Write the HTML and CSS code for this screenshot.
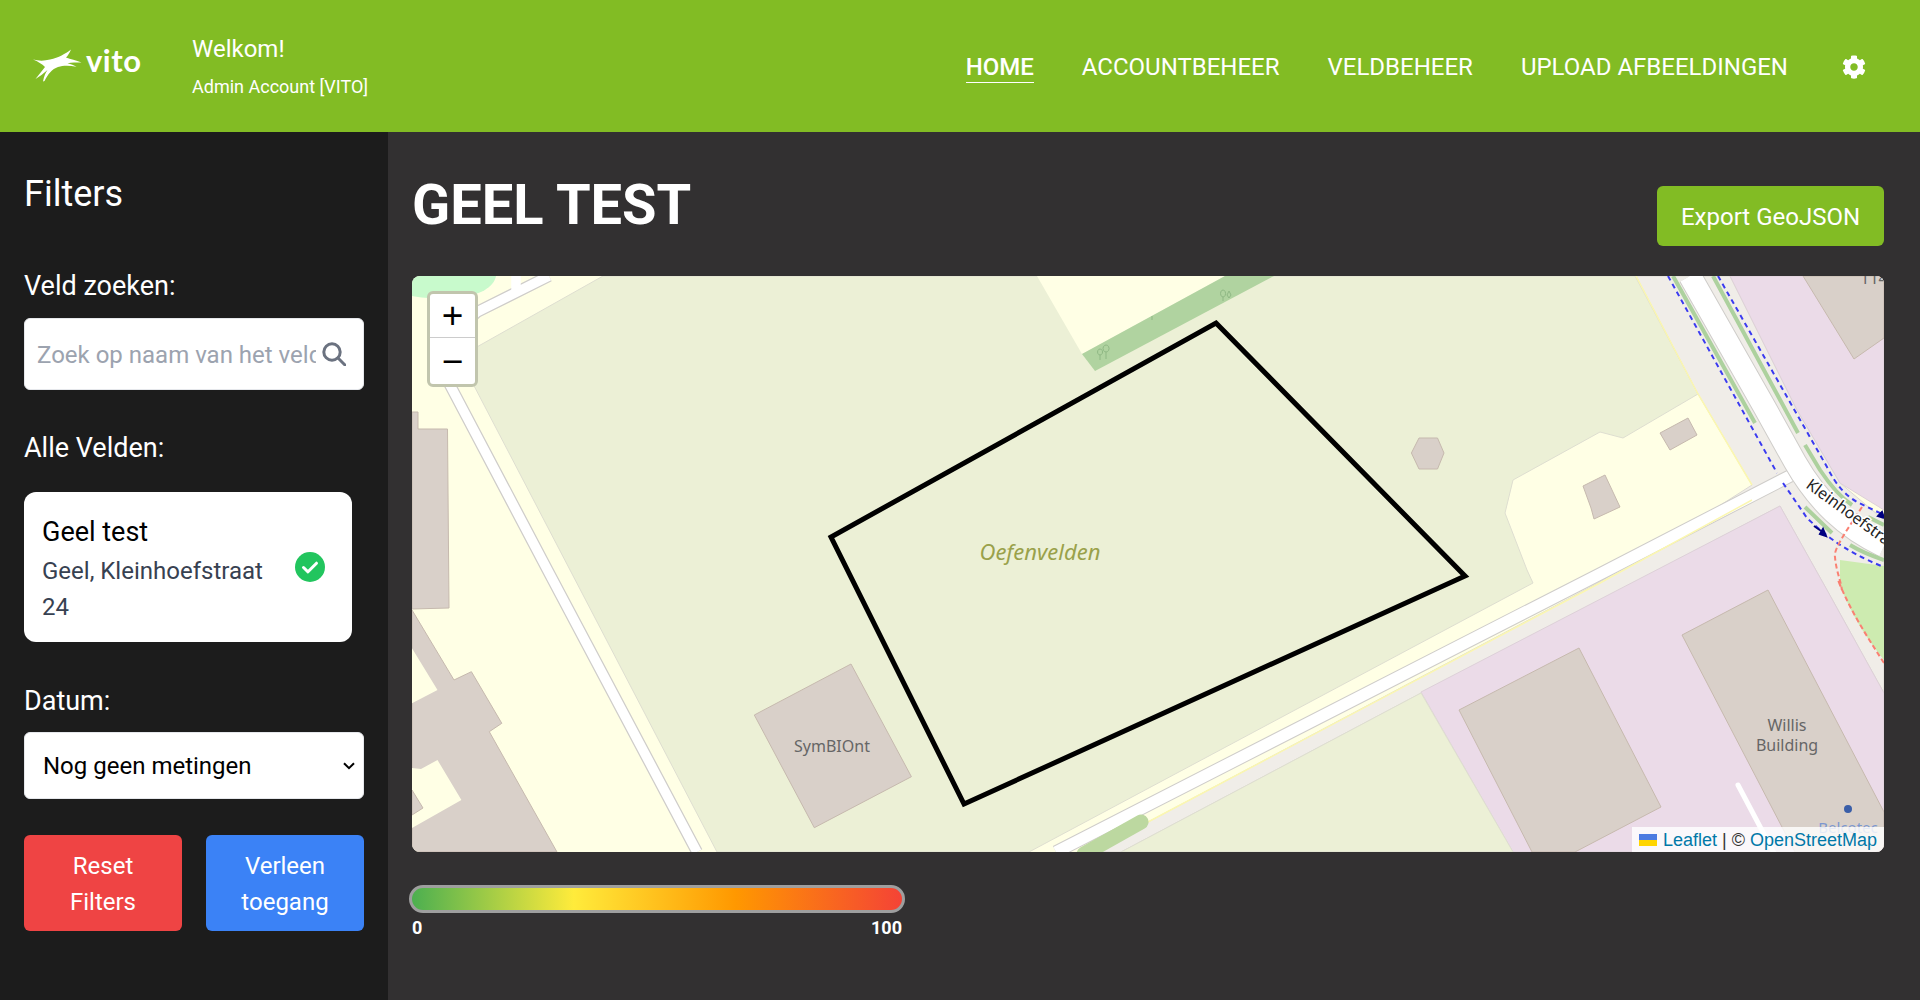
FILE: index.html
```html
<!DOCTYPE html>
<html lang="nl">
<head>
<meta charset="utf-8">
<title>Geel test</title>
<link rel="stylesheet" href="styles.css">
</head>
<body>
<header class="topbar">
  <div class="brand">
    <svg class="bird" viewBox="0 0 50 34" aria-hidden="true"><path d="M0 10.500 C6 12 11 12 17 10.500 C26 8.500 32 5 38 0.500 C36.500 4 35 6.500 33 8.500 C37.500 10 43 11.500 48.500 13.500 C43 13.500 39 13.500 34.500 14.300 C38 15.300 41 16.300 43.500 17.700 C36 16.500 30 16.500 25 18 C19 20 15 25 11.500 32 L10 32.500 C11 27 12.500 24 14.500 21 C10.500 24.500 6.500 27.500 2.500 30 C5.500 26 9 22 12 18 C9 15 5 12.500 0 10.500 Z"/></svg>
    <span class="wordmark">vito</span>
  </div>
  <div class="welcome">
    <div class="welcome-title">Welkom!</div>
    <div class="welcome-user">Admin Account [VITO]</div>
  </div>
  <nav class="nav">
    <a class="nav-link active">HOME</a>
    <a class="nav-link">ACCOUNTBEHEER</a>
    <a class="nav-link">VELDBEHEER</a>
    <a class="nav-link">UPLOAD AFBEELDINGEN</a>
    <svg class="gear" viewBox="0 0 512 512" aria-hidden="true"><path d="M487.400 315.700l-42.600-24.600c4.300-23.200 4.300-47 0-70.200l42.600-24.600c4.900-2.800 7.100-8.600 5.500-14-11.100-35.600-30-67.800-54.700-94.600-3.800-4.100-10-5.100-14.800-2.300L380.800 110c-17.900-15.400-38.500-27.300-60.800-35.100V25.800c0-5.600-3.900-10.500-9.400-11.700-36.700-8.200-74.300-7.800-109.200 0-5.500 1.200-9.400 6.100-9.400 11.700V75c-22.200 7.900-42.800 19.800-60.800 35.100L88.700 85.500c-4.900-2.800-11-1.900-14.800 2.300-24.700 26.700-43.600 58.900-54.700 94.600-1.700 5.400.6 11.200 5.500 14L67.300 221c-4.300 23.200-4.300 47 0 70.200l-42.600 24.600c-4.900 2.800-7.100 8.600-5.500 14 11.100 35.600 30 67.800 54.700 94.600 3.800 4.100 10 5.100 14.800 2.300l42.600-24.600c17.900 15.400 38.500 27.300 60.800 35.100v49.200c0 5.600 3.900 10.500 9.400 11.700 36.700 8.200 74.300 7.800 109.200 0 5.500-1.200 9.400-6.100 9.400-11.700v-49.200c22.200-7.900 42.800-19.800 60.800-35.100l42.600 24.600c4.900 2.800 11 1.900 14.800-2.300 24.700-26.700 43.600-58.900 54.700-94.600 1.500-5.500-.7-11.300-5.600-14.100zM256 336c-44.100 0-80-35.900-80-80s35.900-80 80-80 80 35.900 80 80-35.900 80-80 80z"/></svg>
  </nav>
</header>
<div class="layout">
  <aside class="sidebar">
    <h2 class="filters-title">Filters</h2>
    <label class="field-label label-search">Veld zoeken:</label>
    <div class="search">
      <input class="search-input" type="text" placeholder="Zoek op naam van het veld">
      <svg class="search-icon" viewBox="0 0 24 24" aria-hidden="true"><circle cx="10" cy="10" r="8.200"/><line x1="16" y1="16" x2="23" y2="23"/></svg>
    </div>
    <label class="field-label label-fields">Alle Velden:</label>
    <div class="card">
      <div class="card-text">
        <div class="card-title">Geel test</div>
        <div class="card-address">Geel, Kleinhoefstraat 24</div>
      </div>
      <svg class="card-check" viewBox="0 0 30 30" aria-hidden="true"><circle cx="15" cy="15" r="15"/><path d="M8.500 15.500l4.500 4.300 8.500-8.600"/></svg>
    </div>
    <label class="field-label label-date">Datum:</label>
    <div class="select-wrap">
      <select class="date-select"><option>Nog geen metingen</option></select>
      <svg class="select-chevron" viewBox="0 0 12 8" aria-hidden="true"><path d="M1 1.200l5 5 5-5"/></svg>
    </div>
    <div class="actions">
      <button class="btn btn-red">Reset Filters</button>
      <button class="btn btn-blue">Verleen toegang</button>
    </div>
  </aside>
  <main class="main">
    <div class="title-row">
      <h1 class="page-title">GEEL TEST</h1>
      <button class="export">Export GeoJSON</button>
    </div>
    <div class="map">
      <svg class="map-svg" viewBox="412 276 1472 576" aria-label="Kaart">
        <rect class="m-yellow" x="412" y="276" width="1472" height="576"/>
        <path class="m-meadow" d="M412 276H496C494 287 480 296 455 298C438 299 422 298 412 296Z"/>
        <path class="m-farm" d="M603 276L459 357L717 852H1029L1533 583L1527 570L1505 513L1513 480L1600 432L1623 438L1698 394L1635 276Z"/>
        <path class="m-yellow-e" d="M1037 276L1082 354L1225 276Z"/>
        <path class="m-green-strip" d="M1082 354L1095 371L1274 276H1225Z"/>
        <path class="m-tree" d="M1100 349a2.500 3 0 1 0 .1 0M1100 355v5M1106 345a3 3.500 0 1 0 .1 0M1106 352v7M1223 290a2.500 3.500 0 1 0 .1 0M1223 297v4M1229 291l2 4-2 3-2-3zM1152 316v4"/>

        <path class="m-paved" d="M1092 852H1121L1421 693L1600 600L1620 590L1780 506L1827 590L1884 693V852H1884V520L1840 483L1797 410L1730 276H1636L1698 394L1752 485L1600 582L1148 822Z"/>
        <path class="m-pink" d="M1730 276H1884V510L1840 483L1797 410Z"/>
        <path class="m-pink" d="M1421 692L1780 506L1827 590L1884 693V852H1513Z"/>
        <path class="m-farm" d="M1121 852L1421 693L1513 852Z"/>
        <path class="m-light-green" d="M1840 560L1884 566V660C1866 638 1850 612 1840 585Z"/>

        <path class="m-road-casing thin" d="M549 276L477 312L440 345"/>
        <path class="m-road thin" d="M549 276L477 312L440 345"/>
        <path class="m-road thin" d="M516 276V290"/>
        <path class="m-road-casing thin" d="M435 357L450 385L547.500 570L697 852"/>
        <path class="m-road thin" d="M435 357L450 385L547.500 570L697 852"/>
        <path class="m-road-casing mid" d="M1056 852L1600 574L1790 476"/>
        <path class="m-road mid" d="M1056 852L1600 574L1790 476"/>
        <path class="m-yellow-line" d="M1148 822L1600 583L1752 500"/>
        <path class="m-road-casing wide" d="M1690 276L1765 408L1795 462C1818 502 1846 528 1884 546"/>
        <path class="m-road wide" d="M1690 276L1765 408L1795 462C1818 502 1846 528 1884 546"/>
        <path class="m-yellow-line" d="M1636 276L1698 394L1752 485"/>
        <path class="m-cycle cap" d="M1084 854L1141 822"/>
        <path class="m-cycle-thin" d="M1673 276L1755 423M1713 276L1798 433M1805 445L1820 470C1830 485 1840 497 1852 505M1868 517L1884 525M1805 507L1832 533M1850 545C1860 551 1872 556 1884 560"/>
        <path class="m-blue-dash" d="M1668 276L1777 473M1783 483L1807 518C1820 530 1840 550 1884 567M1718 276L1827 467C1836 485 1845 495 1857 502L1884 515"/>
        <path class="m-red-dash" d="M1862 507L1845 533C1838 545 1834 552 1835 557C1836 570 1840 578 1842 590L1838 580C1850 610 1866 635 1884 663"/>
        <path class="m-arrow" d="M1814 526L1824 533M1820 534L1826 536L1823 529ZM1882 512L1878 516L1884 518Z"/>
        <path class="m-service" d="M1738 785L1775 855"/>

        <path class="m-building" d="M412 412H418V429H447.500L449 608L412 609Z"/>
        <path class="m-building" d="M412 610L454 680L471.400 671.700L501.800 723.300L489.300 731.700L557 852H412Z"/>
        <path class="m-yellow-e" d="M412 648.300L437.500 690L412 703.300ZM412 768L421 769L437.500 760L461.400 800L412 828Z"/>
        <path class="m-building" d="M412 790L423 808L412 815Z"/>
        <path class="m-building" d="M851 664L911.400 776.700L814.300 827.700L754.300 715Z"/>
        <path class="m-building" d="M1419 438H1437.500L1444 453L1437.500 469H1419L1411.400 453Z"/>
        <path class="m-building" d="M1688 418L1697 435L1670 450L1660 433Z"/>
        <path class="m-building" d="M1583 486L1605 475L1620 507L1594 519L1591 508Z"/>
        <path class="m-building" d="M1803 276H1884V338L1854 359Z"/>
        <path class="m-building" d="M1579 648L1661 807L1575 852H1532L1459 710Z"/>
        <path class="m-building" d="M1768 590L1884 812V852H1795L1682 635Z"/>
        <circle class="m-dot" cx="1848" cy="809" r="4"/>

        <text class="t-label" x="1874" y="284">114</text>
        <text class="t-field" x="1040" y="560">Oefenvelden</text>
        <text class="t-label" x="832" y="752">SymBIOnt</text>
        <text class="t-label" x="1787" y="731">Willis</text>
        <text class="t-label" x="1787" y="751">Building</text>
        <text class="t-poi" x="1848" y="833">Belcotec</text>
        <text class="t-street" transform="translate(1805 487) rotate(36)">Kleinhoefstraat</text>

        <path class="m-field-outline" d="M1216 323L1465 576L964 804L831 537Z"/>
      </svg>
      <div class="zoom">
        <div class="zoom-btn zoom-in">+</div>
        <div class="zoom-btn">−</div>
      </div>
      <div class="attribution">
        <svg class="flag" viewBox="0 0 12 8" aria-hidden="true"><rect class="flag-blue" width="12" height="4"/><rect class="flag-yellow" y="4" width="12" height="4"/></svg>
        <a class="attr-link">Leaflet</a> <span class="attr-sep">|</span> © <a class="attr-link">OpenStreetMap</a>
      </div>
    </div>
    <div class="legend">
      <div class="legend-bar"></div>
      <div class="legend-labels"><span>0</span><span>100</span></div>
    </div>
  </main>
</div>
</body>
</html>
```
FILE: styles.css
```css
* { box-sizing: border-box; }
html, body { margin: 0; height: 100%; }
body { font-family: Roboto, "Liberation Sans", sans-serif; background: #323031; color: #fff; overflow: hidden; }

.topbar { height: 132px; background: #82bc24; display: flex; align-items: center; padding: 0 54px 0 33px; }
.brand { display: flex; align-items: center; width: 159px; flex: none; margin-top: -6px; }
.bird { width: 50px; height: 34px; fill: #fff; flex: none; margin-top: 6px; }
.wordmark { font-family: Lato, sans-serif; font-weight: 700; font-size: 31px; line-height: 1; margin: -5px 0 0 3px; letter-spacing: .5px; }
.welcome { margin-top: 0; }
.welcome-title { font-size: 24px; line-height: 32px; }
.welcome-user { font-size: 18px; line-height: 24px; margin-top: 10px; }
.nav { margin-left: auto; margin-top: 3px; display: flex; align-items: center; gap: 48px; }
.nav-link { font-size: 24px; line-height: 30px; border-bottom: 1px solid transparent; }
.nav-link.active { font-weight: 500; border-bottom-color: #fff; }
.gear { width: 24px; height: 24px; fill: #fff; margin: -2px 0 0 6px; }

.layout { display: flex; height: 868px; }
.sidebar { width: 388px; flex: none; background: #1c1c1c; padding: 42px 24px 0; }
.filters-title { margin: 0; font-size: 36px; line-height: 40px; font-weight: 400; }
.field-label { display: block; font-size: 27px; line-height: 36px; }
.label-search { margin-top: 54px; }
.search { margin-top: 14px; height: 72px; width: 340px; background: #fff; border: 1px solid #e5e7eb; border-radius: 6px; display: flex; align-items: center; padding: 0 17px 0 12px; gap: 6px; }
.search-input { flex: 1; min-width: 0; border: 0; outline: 0; background: transparent; font: 400 24px Roboto, sans-serif; padding: 2px 0 0; color: #111; }
.search-input::placeholder { color: #9ca3af; opacity: 1; }
.search-icon { width: 24px; height: 24px; flex: none; fill: none; stroke: #6b7280; stroke-width: 3; stroke-linecap: round; }
.label-fields { margin-top: 40px; }
.card { margin-top: 26px; width: 328px; height: 150px; background: #fff; border-radius: 12px; padding: 4px 27px 0 18px; display: flex; align-items: center; color: #000; }
.card-text { flex: 1; max-width: 240px; margin-right: auto; }
.card-title { font-size: 27px; line-height: 36px; margin-bottom: 3px; }
.card-address { font-size: 24px; line-height: 36px; color: #374151; }
.card-check { width: 30px; height: 30px; flex: none; margin-top: -4px; }
.card-check circle { fill: #22c55e; }
.card-check path { fill: none; stroke: #fff; stroke-width: 3; stroke-linecap: round; stroke-linejoin: round; }
.label-date { margin-top: 41px; }
.select-wrap { position: relative; margin-top: 13px; width: 340px; height: 67px; }
.date-select { display: block; width: 100%; height: 100%; appearance: none; -webkit-appearance: none; background: #fff; color: #000; border: 1px solid #e5e7eb; border-radius: 6px; font: 400 24px Roboto, sans-serif; padding: 0 18px; outline: 0; }
.select-chevron { position: absolute; right: 9px; top: 30px; width: 12px; height: 8px; fill: none; stroke: #000; stroke-width: 2; pointer-events: none; }
.actions { margin-top: 36px; display: grid; grid-template-columns: 158px 158px; gap: 24px; }
.btn { height: 96px; border: 0; border-radius: 6px; color: #fff; font: 400 24px/36px Roboto, sans-serif; padding: 2px 24px 0; }
.btn-red { background: #ef4444; }
.btn-blue { background: #3b82f6; }

.main { flex: 1; padding: 0 36px 0 24px; min-width: 0; }
.title-row { height: 144px; display: flex; justify-content: space-between; align-items: flex-start; }
.page-title { margin: 41px 0 0; font-size: 56px; line-height: 64px; font-weight: 700; }
.export { margin-top: 54px; width: 227px; height: 60px; background: #82bc24; color: #fff; border: 0; border-radius: 6px; font: 400 24px Roboto, sans-serif; padding: 2px 0 0; }
.map { position: relative; height: 576px; border-radius: 8px; overflow: hidden; }
.map-svg { display: block; width: 100%; height: 100%; }

.m-yellow, .m-yellow-e { fill: #ffffe5; }
.m-meadow { fill: #c8facc; }
.m-farm { fill: #ecf0d6; stroke: #deded0; stroke-width: 1; }
.m-green-strip { fill: #b0d3a0; }
.m-tree { fill: none; stroke: #8fb884; stroke-width: 1; }
.m-paved { fill: #f0ede8; stroke: #dcd9d2; stroke-width: 1; }
.m-pink { fill: #ebdbe8; stroke: #ddd0d8; stroke-width: 1; }
.m-light-green { fill: #cdebb0; }
.m-road-casing, .m-road { fill: none; }
.m-road-casing { stroke: #cfcdca; }
.m-road { stroke: #fff; }
.m-road-casing.thin { stroke-width: 12px; }
.m-road.thin { stroke-width: 9.500px; }
.m-road-casing.mid { stroke-width: 13.500px; }
.m-road.mid { stroke-width: 11.500px; }
.m-road-casing.wide { stroke-width: 24px; }
.m-road.wide { stroke-width: 22px; }
.m-yellow-line { fill: none; stroke: #fbf7b0; stroke-width: 1.500px; }
.m-cycle { fill: none; stroke: #bcd8a0; stroke-width: 15px; stroke-linecap: round; }
.m-cycle-thin { fill: none; stroke: #add19e; stroke-width: 4px; }
.m-blue-dash { fill: none; stroke: #3b3bf0; stroke-width: 2px; stroke-dasharray: 5 4; }
.m-red-dash { fill: none; stroke: #fa8072; stroke-width: 2px; stroke-dasharray: 5 3; }
.m-arrow { fill: #000080; stroke: #000080; stroke-width: 2px; }
.m-service { fill: none; stroke: #fff; stroke-width: 5px; stroke-linecap: round; }
.m-building { fill: #d9d0c9; stroke: #c6b9ae; stroke-width: 1px; }
.m-dot { fill: #3a5ea8; }
.m-field-outline { fill: none; stroke: #000; stroke-width: 5px; stroke-linejoin: miter; }

.t-label { font: 400 16px "Noto Sans", sans-serif; fill: #666; text-anchor: middle; }
.t-field { font: italic 400 22px "Noto Sans", sans-serif; fill: #9aa14a; text-anchor: middle; }
.t-poi { font: 400 15px "Noto Sans", sans-serif; fill: #7b97d0; text-anchor: middle; }
.t-street { font: 400 16px "Noto Sans", sans-serif; fill: #222; paint-order: stroke; stroke: #fff; stroke-width: 3px; }

.zoom { position: absolute; left: 15px; top: 15px; width: 51px; border: 3px solid #c1c5ad; border-radius: 6px; background: #fff; color: #000; }
.zoom-btn { height: 46px; display: flex; align-items: center; justify-content: center; font: 400 37px/1 "Liberation Sans", sans-serif; }
.zoom-in { border-bottom: 1px solid #ccc; height: 44px; }
.attribution { position: absolute; right: 0; bottom: 0; width: 252px; height: 25px; background: rgba(255, 255, 255, 0.8); font: 400 18px/26px "Liberation Sans", sans-serif; color: #333; padding-left: 7px; white-space: nowrap; }
.flag { display: inline-block; width: 18px; height: 12px; vertical-align: 0; margin-right: 1px; }
.flag-blue { fill: #4c7be1; }
.flag-yellow { fill: #ffd500; }
.attr-link { color: #0078a8; }

.legend { width: 496px; margin: 33px 0 0 -3px; }
.legend-bar { height: 28px; border: 3px solid #9e9e9e; border-radius: 14px; background: linear-gradient(to right, #4caf50, #ffeb3b 33%, #ff9800 66%, #f44336); }
.legend-labels { display: flex; justify-content: space-between; padding: 4px 3px 0; font-size: 18px; line-height: 22px; font-weight: 700; }
```
